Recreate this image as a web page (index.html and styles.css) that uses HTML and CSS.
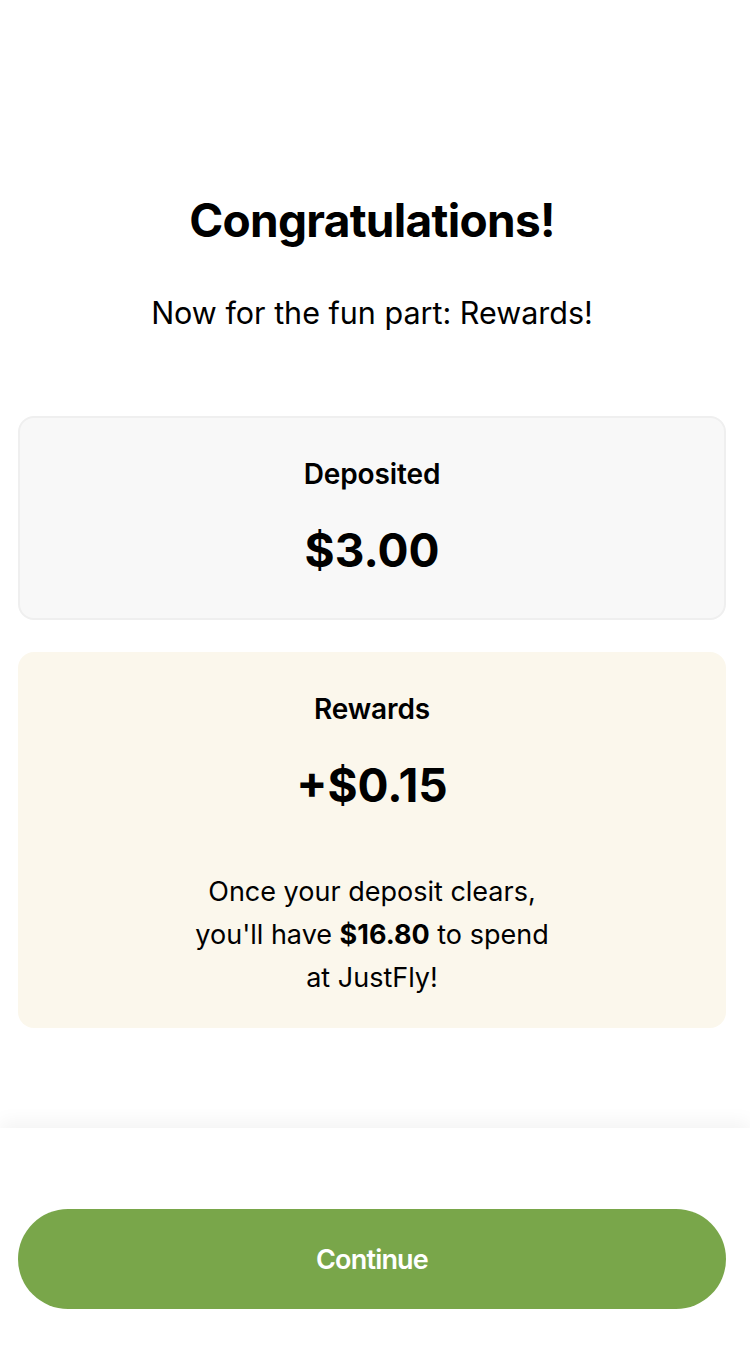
FILE: index.html
```html
<!DOCTYPE html>
<html lang="en">
<head>
    <meta charset="UTF-8">
    <meta name="viewport" content="width=device-width, initial-scale=1.0">
    <title>Congratulations</title>
    <link rel="stylesheet" href="styles.css">
</head>
<body>
    <div class="page">
        <div class="content">
            <h1>Congratulations!</h1>
            <p class="subtitle">Now for the fun part: Rewards!</p>

            <div class="card card-deposit">
                <div class="card-label">Deposited</div>
                <div class="card-amount">$3.00</div>
            </div>

            <div class="card card-rewards">
                <div class="card-label">Rewards</div>
                <div class="card-amount">+$0.15</div>
                <p class="card-note">Once your deposit clears,<br>you'll have <b>$16.80</b> to spend<br>at JustFly!</p>
            </div>
        </div>

        <!-- Sticky footer with the main action -->
        <div class="footer">
            <button class="continue-btn">Continue</button>
        </div>
    </div>
</body>
</html>
```

FILE: styles.css
```css
body {
    font-family: Inter, "Liberation Sans", sans-serif;
    background-color: #fff;
    color: #000;
    margin: 0;
    padding: 0;
}

.page {
    display: flex;
    flex-direction: column;
    min-height: 1350px;
}

.content {
    padding: 188px 24px 0 18px;
    text-align: center;
}

h1 {
    font-size: 46px;
    font-weight: 700;
    letter-spacing: -0.7px;
    line-height: 64px;
    margin: 0;
}

.subtitle {
    font-size: 30.5px;
    line-height: 40px;
    margin: 41px 0 83px;
}

.card {
    border-radius: 16px;
    text-align: center;
}

.card-deposit {
    background-color: #f8f8f8;
    border: 2px solid #efefef;
    padding: 36px 0 40px;
}

.card-rewards {
    background-color: #fbf7ec;
    margin-top: 32px;
    padding: 37px 0 29px;
}

.card-label {
    font-size: 28px;
    font-weight: 600;
    letter-spacing: -0.1px;
    line-height: 40px;
}

.card-amount {
    font-size: 46px;
    font-weight: 700;
    line-height: 56px;
    margin-top: 28px;
}

.card-note {
    font-size: 27px;
    line-height: 43px;
    margin: 57px 0 0;
}

.card-note b {
    font-weight: 700;
}

.footer {
    margin-top: auto;
    padding: 81px 24px 41px 18px;
    background-color: #fff;
    box-shadow: 0 -6px 18px rgba(0, 0, 0, 0.05);
}

.continue-btn {
    display: block;
    width: 100%;
    height: 100px;
    border: none;
    border-radius: 50px;
    background-color: #79a64a;
    color: #fff;
    font-family: Inter, "Liberation Sans", sans-serif;
    font-size: 27px;
    font-weight: 600;
    letter-spacing: -0.8px;
    cursor: pointer;
}
```
